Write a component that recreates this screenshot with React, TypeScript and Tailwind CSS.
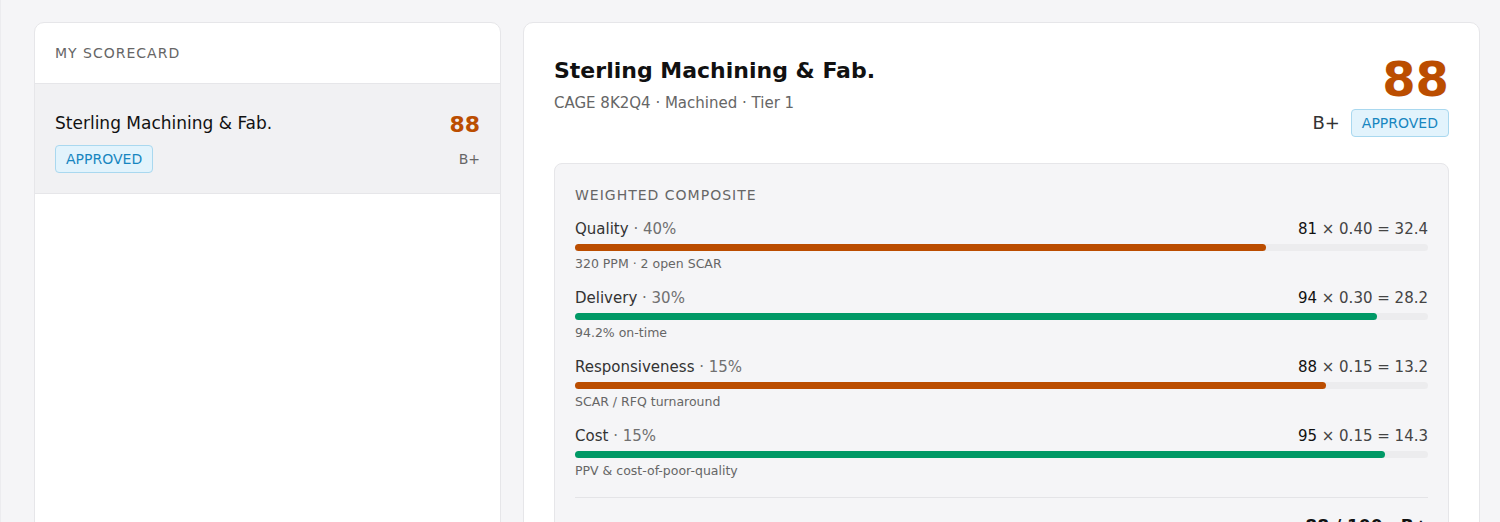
const FACTORS = [
  { name: 'Quality', weight: 40, score: 81, w: '0.40', pts: '32.4', note: '320 PPM · 2 open SCAR', tone: 'amber' },
  { name: 'Delivery', weight: 30, score: 94, w: '0.30', pts: '28.2', note: '94.2% on-time', tone: 'green' },
  { name: 'Responsiveness', weight: 15, score: 88, w: '0.15', pts: '13.2', note: 'SCAR / RFQ turnaround', tone: 'amber' },
  { name: 'Cost', weight: 15, score: 95, w: '0.15', pts: '14.3', note: 'PPV & cost-of-poor-quality', tone: 'green' },
];

function Badge() {
  return (
    <span className="inline-block rounded border border-[#a9d8ef] bg-[#e2f3fc] px-2.5 py-[3px] text-sm leading-5 text-[#1786c0]">
      APPROVED
    </span>
  );
}

export default function App() {
  return (
    <div className="min-h-screen border-l border-[#ececef] bg-[#f5f5f7] pl-[33px] pr-5 pt-[22px] font-['DejaVu_Sans',sans-serif] text-[#111]">
      <div className="grid grid-cols-[467px_1fr] gap-[22px]">
        {/* Scorecard list */}
        <div className="min-h-[600px] rounded-[10px] border border-[#e6e6e9] bg-white">
          <div className="border-b border-[#e6e6e9] px-5 py-5 text-sm leading-5 tracking-[1px] text-[#666]">
            MY SCORECARD
          </div>
          <div className="border-b border-[#e6e6e9] bg-[#f1f1f3] px-5 pb-5 pt-[26px]">
            <div className="flex h-7 items-center justify-between">
              <span className="text-[17px] text-[#111]">Sterling Machining &amp; Fab.</span>
              <span className="text-[22px] font-bold text-amber-700">88</span>
            </div>
            <div className="mt-[7px] flex items-center justify-between">
              <Badge />
              <span className="text-sm text-[#666]">B+</span>
            </div>
          </div>
        </div>

        {/* Detail */}
        <div className="min-h-[600px] rounded-[10px] border border-[#e6e6e9] bg-white px-[30px] py-8">
          <div className="flex items-start justify-between">
            <div>
              <h1 className="text-[22px] font-bold leading-8">Sterling Machining &amp; Fab.</h1>
              <p className="mt-1.5 text-[15px] leading-5 text-[#666]">CAGE 8K2Q4 · Machined · Tier 1</p>
            </div>
            <div className="flex flex-col items-end">
              <span className="text-5xl font-bold leading-none text-amber-700">88</span>
              <div className="mt-1.5 flex items-center gap-[11px]">
                <span className="text-lg text-[#333]">B+</span>
                <Badge />
              </div>
            </div>
          </div>

          <div className="mt-[26px] rounded-lg border border-[#e6e6e9] bg-[#f5f5f7] px-5 pt-[21px]">
            <div className="mb-3.5 text-sm leading-5 tracking-[1px] text-[#666]">WEIGHTED COMPOSITE</div>
            <div className="flex flex-col gap-4">
              {FACTORS.map((f) => (
                <div key={f.name}>
                  <div className="flex justify-between text-[15px] leading-5">
                    <span className="text-[#333]">
                      {f.name}
                      <span className="text-[#707070]"> · {f.weight}%</span>
                    </span>
                    <span className="text-[#444]">
                      <span className="text-[#111]">{f.score}</span> × {f.w} = {f.pts}
                    </span>
                  </div>
                  <div className="mt-[5px] h-[7px] rounded-full bg-[#ececee]">
                    <div
                      className={f.tone === 'amber' ? 'h-full rounded-full bg-amber-700' : 'h-full rounded-full bg-emerald-600'}
                      style={{ width: `${f.score}%` }}
                    />
                  </div>
                  <div className="mt-[5px] text-[12.5px] leading-4 text-[#666]">{f.note}</div>
                </div>
              ))}
            </div>
            <div className="mt-[18px] flex items-center justify-between border-t border-[#e4e4e7] pb-5 pt-4">
              <span className="text-sm leading-5 tracking-[1px] text-[#666]">COMPOSITE</span>
              <span className="text-[17px] font-bold">88 / 100 · B+</span>
            </div>
          </div>
        </div>
      </div>
    </div>
  );
}
